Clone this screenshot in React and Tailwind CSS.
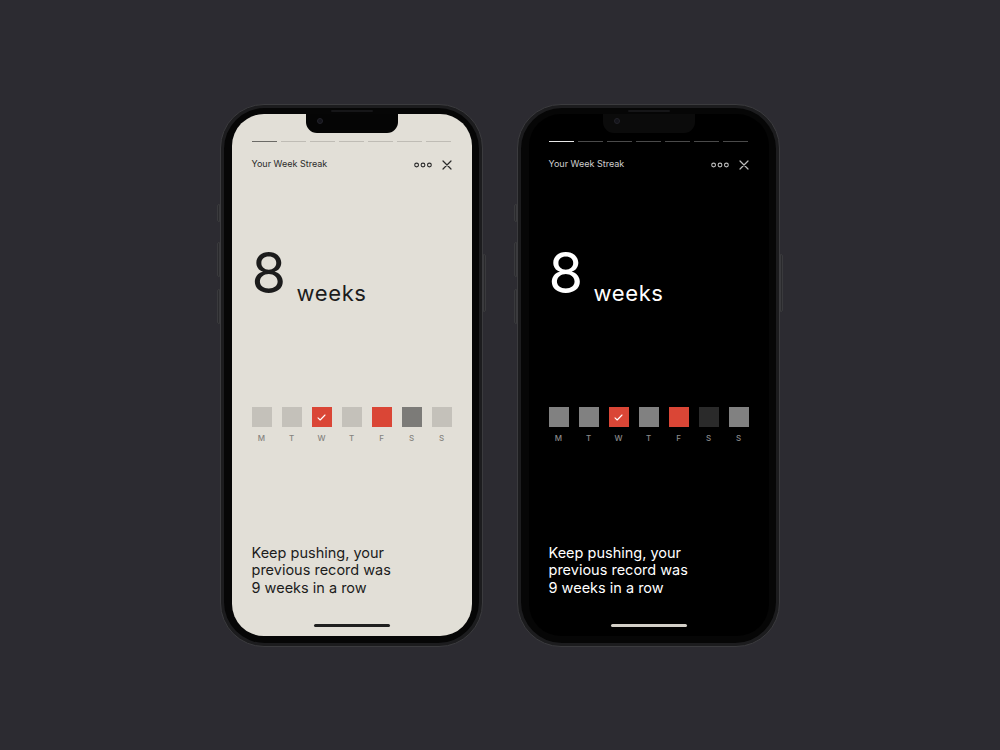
const days = [
  { label: 'M', state: 'idle' },
  { label: 'T', state: 'idle' },
  { label: 'W', state: 'today' },
  { label: 'T', state: 'idle' },
  { label: 'F', state: 'done' },
  { label: 'S', state: 'missed' },
  { label: 'S', state: 'idle' },
];

const themes = {
  light: {
    screen: 'bg-[#e2dfd7]',
    notch: 'bg-[#050505]',
    text: 'text-[#1c1c1c]',
    title: 'text-[#2a2a2a]',
    icon: '#2a2a2a',
    day: 'text-[#86847f]',
    barOn: 'bg-[#6b6a66]',
    barOff: 'bg-[#bfbcb5]',
    idle: 'bg-[#c4c1ba]',
    missed: 'bg-[#7c7b78]',
    home: 'bg-[#1f1f1f]',
  },
  dark: {
    screen: 'bg-black',
    notch: 'bg-[#0b0b0b]',
    text: 'text-white',
    title: 'text-[#cfcfcf]',
    icon: '#bdbdbd',
    day: 'text-[#8a8a8a]',
    barOn: 'bg-[#e8e8e8]',
    barOff: 'bg-[#4a4a4a]',
    idle: 'bg-[#818181]',
    missed: 'bg-[#2a2a2a]',
    home: 'bg-[#d3cfc7]',
  },
};

function MoreIcon({ color }) {
  return (
    <svg width="18" height="6" viewBox="0 0 18 6" fill="none" stroke={color} strokeWidth="1.1">
      <circle cx="2.6" cy="3" r="1.9" />
      <circle cx="9" cy="3" r="1.9" />
      <circle cx="15.4" cy="3" r="1.9" />
    </svg>
  );
}

function CloseIcon({ color }) {
  return (
    <svg width="10" height="10" viewBox="0 0 10 10" fill="none" stroke={color} strokeWidth="1.2" strokeLinecap="round">
      <path d="M1 1L9 9M9 1L1 9" />
    </svg>
  );
}

function DaySquare({ state, t }) {
  if (state === 'today') {
    return (
      <div className="w-[20px] h-[20px] bg-[#da4636] flex items-center justify-center">
        <svg width="9" height="7" viewBox="0 0 9 7" fill="none" stroke="white" strokeWidth="1.1" strokeLinecap="round" strokeLinejoin="round">
          <path d="M1 3.8L3.2 6L8 1" />
        </svg>
      </div>
    );
  }
  const bg = state === 'done' ? 'bg-[#da4636]' : state === 'missed' ? t.missed : t.idle;
  return <div className={`w-[20px] h-[20px] ${bg}`} />;
}

function Phone({ theme }) {
  const t = themes[theme];
  return (
    <div className="relative w-[263px] h-[543px] rounded-[44px] border border-[#3b3b3e] bg-[#1c1c1e] p-[3px]">
      {/* side buttons */}
      <div className="absolute -left-[4px] top-[99px] w-[3px] h-[18px] rounded-l-[2px] bg-[#2a2a2d] border border-[#3a3a3d]" />
      <div className="absolute -left-[4px] top-[137px] w-[3px] h-[35px] rounded-l-[2px] bg-[#2a2a2d] border border-[#3a3a3d]" />
      <div className="absolute -left-[4px] top-[184px] w-[3px] h-[35px] rounded-l-[2px] bg-[#2a2a2d] border border-[#3a3a3d]" />
      <div className="absolute -right-[4px] top-[149px] w-[3px] h-[58px] rounded-r-[2px] bg-[#2a2a2d] border border-[#3a3a3d]" />

      <div className="relative w-full h-full rounded-[41px] bg-[#060606] flex items-center justify-center">
        {/* speaker slit */}
        <div className="absolute top-[2px] left-1/2 -translate-x-1/2 w-[42px] h-[2px] rounded-full bg-[#161618]" />

        <div
          className={`relative w-[240px] h-[522px] rounded-[32px] overflow-hidden flex flex-col px-[20px] ${t.screen}`}
          style={{ fontFamily: 'Inter, "Liberation Sans", sans-serif' }}
        >
          {/* notch */}
          <div className={`absolute top-0 left-1/2 -translate-x-1/2 w-[92px] h-[19px] rounded-b-[11px] ${t.notch}`}>
            <div className="absolute left-[11px] top-[4px] w-[6px] h-[6px] rounded-full bg-[#14141a] border border-[#23232b]" />
          </div>

          {/* story progress */}
          <div className="mt-[27px] flex gap-[4px]">
            {[0, 1, 2, 3, 4, 5, 6].map((i) => (
              <div key={i} className={`flex-1 h-px ${i === 0 ? t.barOn : t.barOff}`} />
            ))}
          </div>

          <div className="mt-[16px] flex items-start justify-between">
            <span className={`text-[9px] leading-[12px] ${t.title}`}>Your Week Streak</span>
            <div className="mt-[2px] flex items-center gap-[10px]">
              <MoreIcon color={t.icon} />
              <CloseIcon color={t.icon} />
            </div>
          </div>

          <div className={`mt-[75px] flex items-end ${t.text}`}>
            <span className="text-[56px] leading-none tracking-[0.04em]">8</span>
            <span className="ml-[8px] text-[22px] leading-[16px] tracking-[0.03em]">weeks</span>
          </div>

          <div className="mt-[106px] flex justify-between">
            {days.map((d, i) => (
              <div key={i} className="flex flex-col items-center">
                <DaySquare state={d.state} t={t} />
                <span className={`mt-[6px] text-[8px] leading-[10px] font-medium ${t.day}`}>{d.label}</span>
              </div>
            ))}
          </div>

          <div className="flex-1" />

          <p className={`text-[14.5px] leading-[17.5px] ${t.text}`}>
            Keep pushing, your
            <br />
            previous record was
            <br />9 weeks in a row
          </p>

          <div className={`mt-[28px] mb-[9px] mx-auto w-[76px] h-[3px] rounded-full ${t.home}`} />
        </div>
      </div>
    </div>
  );
}

export default function App() {
  return (
    <div className="w-full min-h-screen h-[750px] bg-[#2c2b31] flex items-center justify-center gap-[34px]">
      <Phone theme="light" />
      <Phone theme="dark" />
    </div>
  );
}
